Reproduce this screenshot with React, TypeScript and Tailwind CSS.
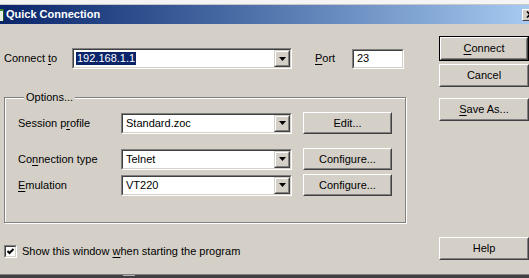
import React from "react"

interface BoxProps {
    className?: string
    children?: React.ReactNode
}

// sunken white field (edit / combo)
const Sunken = ({className = "", children}: BoxProps) => (
    <div className={`border border-t-[#808080] border-l-[#808080] border-b-white border-r-white ${className}`}>
        <div className="h-full w-full border border-t-[#404040] border-l-[#404040] border-b-[#D4D0C8] border-r-[#D4D0C8] bg-white flex items-center">
            {children}
        </div>
    </div>
)

const DropButton = () => (
    <div className="h-full w-[16px] shrink-0 border border-t-[#D4D0C8] border-l-[#D4D0C8] border-b-[#404040] border-r-[#404040]">
        <div className="h-full w-full bg-[#D4D0C8] border border-t-white border-l-white border-b-[#808080] border-r-[#808080] flex items-center justify-center">
            <svg width="7" height="4" viewBox="0 0 7 4" className="block">
                <polygon points="0,0 7,0 3.5,4" fill="#000" />
            </svg>
        </div>
    </div>
)

interface ComboProps {
    value: string
    className: string
    selected?: boolean
}

const Combo = ({value, className, selected}: ComboProps) => (
    <Sunken className={`h-[21px] ${className}`}>
        <div className="flex-1 pl-[2px] whitespace-nowrap overflow-hidden">
            {selected ? (
                <span className="bg-[#0A246A] text-white px-[1px] py-[1px]">{value}</span>
            ) : (
                <span className="pl-[1px]">{value}</span>
            )}
        </div>
        <DropButton />
    </Sunken>
)

interface BtnProps extends BoxProps {
    isDefault?: boolean
}

const Btn = ({className = "", isDefault, children}: BtnProps) => (
    <div className={`${isDefault ? "border border-black" : ""} ${className}`}>
        <div className="h-full border border-t-white border-l-white border-b-[#404040] border-r-[#404040]">
            <div className="h-full border border-t-[#D4D0C8] border-l-[#D4D0C8] border-b-[#808080] border-r-[#808080] flex items-center justify-center">
                <span>{children}</span>
            </div>
        </div>
    </div>
)

const U = ({children}: BoxProps) => (
    <span className="underline underline-offset-[2px]">{children}</span>
)

const OptionRow = ({label, value, button, className = ""}: {label: React.ReactNode, value: string, button: string, className?: string}) => (
    <div className={`flex items-center ${className}`}>
        <div className="w-[103px]">{label}</div>
        <Combo value={value} className="w-[171px]" />
        <Btn className="ml-[11px] w-[89px] h-[22px]">{button}</Btn>
    </div>
)

export default function App() {
    return (
        <div className="w-[529px] h-[278px] overflow-hidden bg-[#D4D0C8] flex flex-col font-['Liberation_Sans',Arial,sans-serif] text-[11px] leading-[13px] text-black">
            {/* window edge above the caption */}
            <div className="h-[5px] shrink-0 bg-[#F4F4F4] border-b border-[#C8C8C8]" />

            {/* caption */}
            <div className="h-[19px] shrink-0 flex items-center overflow-hidden bg-gradient-to-r from-[#0A246A] to-[#A6CAF0]">
                <svg width="4" height="14" viewBox="0 0 4 14" className="block shrink-0">
                    <rect x="0" y="1" width="4" height="12" fill="#E8F0E0" />
                    <rect x="0" y="1" width="4" height="2" fill="#3A8A3A" />
                    <rect x="3" y="1" width="1" height="12" fill="#2C5A2C" />
                </svg>
                <span className="ml-[2px] font-bold text-white">Quick Connection</span>
                {/* close box, clipped by the screen edge */}
                <div className="ml-auto -mr-[9px] w-[16px] h-[12px] shrink-0 bg-[#D4D0C8] border border-t-white border-l-white border-b-[#404040] border-r-[#404040] flex items-center justify-center">
                    <svg width="8" height="7" viewBox="0 0 8 7" className="block">
                        <path d="M1 0.5 L7 6.5 M7 0.5 L1 6.5" stroke="#000" strokeWidth="1.6" />
                    </svg>
                </div>
            </div>

            {/* body */}
            <div className="flex-1 flex">
                <div className="w-[439px] shrink-0 pl-[4px] flex flex-col">
                    <div className="mt-[24px] flex items-center">
                        <div className="w-[68px]">Connect <U>t</U>o</div>
                        <Combo value="192.168.1.1" className="w-[220px]" selected />
                        <div className="ml-[23px] w-[37px]"><U>P</U>ort</div>
                        <Sunken className="w-[52px] h-[20px]">
                            <span className="pl-[3px]">23</span>
                        </Sunken>
                    </div>

                    <fieldset className="mt-[22px] w-[401px] h-[132px] border border-[#808080] shadow-[inset_1px_1px_0_#fff,1px_1px_0_#fff] px-[13px]">
                        <legend className="ml-[6px] px-[2px] bg-[#D4D0C8]">Options...</legend>
                        <OptionRow className="mt-[8px]" label={<>Session p<U>r</U>ofile</>} value="Standard.zoc" button="Edit..." />
                        <OptionRow className="mt-[14px]" label={<>Co<U>n</U>nection type</>} value="Telnet" button="Configure..." />
                        <OptionRow className="mt-[4px]" label={<><U>E</U>mulation</>} value="VT220" button="Configure..." />
                    </fieldset>

                    <div className="mt-[22px] flex items-center">
                        <Sunken className="w-[13px] h-[13px]">
                            <svg width="9" height="9" viewBox="0 0 9 9" className="block mx-auto">
                                <path d="M1.5 4 L3.5 6 L7.5 2" stroke="#000" strokeWidth="2" fill="none" />
                            </svg>
                        </Sunken>
                        <span className="ml-[5px]">Show this window <U>w</U>hen starting the program</span>
                    </div>
                </div>

                <div className="w-[90px] shrink-0 flex flex-col">
                    <Btn isDefault className="mt-[12px] h-[25px]"><U>C</U>onnect</Btn>
                    <Btn className="mt-[3px] h-[23px]">Cancel</Btn>
                    <Btn className="mt-[11px] h-[23px]"><U>S</U>ave As...</Btn>
                    <Btn className="mt-[116px] h-[23px]">Help</Btn>
                </div>
            </div>

            {/* edge of the window below */}
            <div className="h-[4px] shrink-0 bg-[#404040] border-t border-[#808080]">
                <div className="ml-[123px] w-[12px] h-[1px] bg-[#B0B0B0]" />
            </div>
        </div>
    )
}
